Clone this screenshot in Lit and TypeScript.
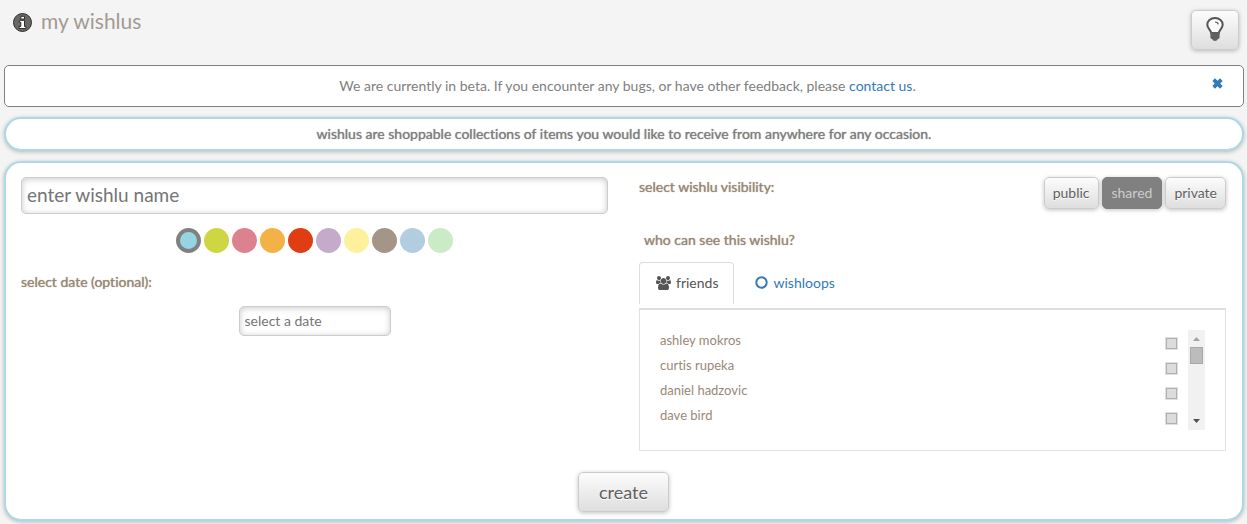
import { LitElement, html, css, svg } from "lit";
import { customElement, state } from "lit/decorators.js";
import { classMap } from "lit/directives/class-map.js";
import { styleMap } from "lit/directives/style-map.js";

const COLORS = [
  { name: "sky", value: "#96d4e2" },
  { name: "lime", value: "#cfd643" },
  { name: "rose", value: "#dc818e" },
  { name: "orange", value: "#f4b145" },
  { name: "red", value: "#df3e15" },
  { name: "lilac", value: "#c5abcb" },
  { name: "yellow", value: "#fdf29b" },
  { name: "taupe", value: "#a39587" },
  { name: "blue", value: "#b2cde0" },
  { name: "mint", value: "#caebc5" },
];
const FRIENDS = ["ashley mokros", "curtis rupeka", "daniel hadzovic", "dave bird"];
const VISIBILITIES = ["public", "shared", "private"];

const infoIcon = svg`<svg width="20" height="20" viewBox="0 0 20 20" aria-hidden="true">
  <circle cx="10.500" cy="10.500" r="9" fill="#6b6764" stroke="#2e2e2e" stroke-width="1"/>
  <path d="M7.300 8.300h5.200v6.200h1.400v2H7.100v-2h1.700v-4.200H7.300zM8.800 4.300h3.700v2.800H8.800z" fill="#fff" stroke="#2e2e2e" stroke-width="1"/>
</svg>`;

const bulbIcon = svg`<svg width="18" height="26" viewBox="0 0 18 26" aria-hidden="true">
  <path d="M9 2C4.400 2 1.300 4.900 1.300 8.700c0 3.800 3.600 5 3.900 8.300h7.600c.3-3.300 3.900-4.500 3.900-8.300C16.700 4.900 13.600 2 9 2z" fill="#fcfcfc" stroke="#555" stroke-width="2"/>
  <path d="M9 6c1.900 0 3.100.9 3.300 2.400" fill="none" stroke="#555" stroke-width="1.200"/>
  <path d="M4.400 16.200h9.200v5c0 1-.9 1.800-2 2-.3.900-1.300 1.700-2.600 1.700s-2.300-.8-2.600-1.700c-1.100-.2-2-1-2-2z" fill="#606060"/>
</svg>`;

const closeIcon = svg`<svg width="11" height="11" viewBox="0 0 10 10" aria-hidden="true">
  <path d="M2.700.300 5 2.500 7.300.300 9.700 2.700 7.500 5 9.700 7.300 7.300 9.700 5 7.500 2.700 9.700.300 7.300 2.500 5 .300 2.700z" fill="#337ab7"/>
</svg>`;

const groupIcon = svg`<svg width="15" height="14" viewBox="0 0 1920 1792" aria-hidden="true">
  <path fill="#555" d="M593 896q-162 5-265 128H194q-82 0-138-40.500T0 865q0-353 124-353 6 0 43.500 21t97.500 42.500T384 597q67 0 133-23-5 37-5 66 0 139 81 256zm1071 637q0 120-73 189.500t-194 69.500H523q-121 0-194-69.500T256 1533q0-53 3.500-103.500t14-109T300 1212t43-97.500 62-81 85.500-53.500T602 960q10 0 43 21.500t73 48 107 48 135 21.500 135-21.500 107-48 73-48 43-21.500q61 0 111.500 20t85.500 53.500 62 81 43 97.500 26.500 108.500 14 109 3.500 103.500zM640 256q0 106-75 181t-181 75-181-75-75-181 75-181T384 0t181 75 75 181zm704 384q0 159-112.500 271.500T960 1024 688.500 911.500 576 640t112.500-271.500T960 256t271.500 112.500T1344 640zm576 225q0 78-56 118.500t-138 40.500h-134q-103-123-265-128 81-117 81-256 0-29-5-66 66 23 133 23 59 0 119-21.500t97.500-42.500 43.500-21q124 0 124 353zm-128-609q0 106-75 181t-181 75-181-75-75-181 75-181 181-75 181 75 75 181z"/>
</svg>`;

const ringIcon = svg`<svg width="13" height="13" viewBox="0 0 13 13" aria-hidden="true">
  <circle cx="6.500" cy="6.500" r="5.200" fill="none" stroke="#337ab7" stroke-width="2"/>
</svg>`;

@customElement("app-root")
export class AppRoot extends LitElement {
  @state() private color = "sky";
  @state() private visibility = "shared";
  @state() private tab = "friends";
  @state() private noticeOpen = true;

  static styles = css`
    :host {
      display: block;
      min-height: 100vh;
      box-sizing: border-box;
      padding: 0 3px 3px 4px;
      background: #f4f4f4;
      color: #808080;
      font: 14px/20px Lato, sans-serif;
      font-variant-ligatures: none;
    }
    *, *::before { box-sizing: border-box; }
    button, input { font-family: inherit; font-variant-ligatures: none; margin: 0; }
    button { cursor: pointer; }
    svg { display: block; flex: none; }
    a { color: #337ab7; text-decoration: none; }
    .header {
      display: flex;
      justify-content: space-between;
      align-items: flex-start;
      padding: 10px 5px 15px 8px;
    }
    .title { display: flex; align-items: flex-end; gap: 9px; }
    h1 { margin: 0; font-size: 21px; line-height: 22px; font-weight: 400; color: #a39a93; }
    .btn {
      border: 1px solid #ccc;
      border-radius: 5px;
      background: linear-gradient(#fcfcfc, #dedede);
      box-shadow: 0 1px 4px rgba(0, 0, 0, 0.25);
      color: #606060;
      text-shadow: 0 1px 0 #fff;
    }
    .hint { width: 48px; height: 40px; padding: 0 0 2px; display: grid; place-items: center; }
    .notice {
      display: flex;
      align-items: center;
      padding: 10px 20px 10px 38px;
      border: 1px solid #808080;
      border-radius: 5px;
      background: #fff;
    }
    .notice p { flex: 1; margin: 0; text-align: center; }
    .close { padding: 0 0 5px; border: 0; background: none; }
    .card {
      margin-top: 10px;
      border: 2px solid #add8e6;
      border-radius: 17px;
      background: #fff;
      box-shadow: 0 1px 4px rgba(0, 0, 0, 0.25);
    }
    .strong { text-shadow: 0 0 1px currentColor; }
    .intro { padding: 5px 15px; text-align: center; }
    .form { padding: 14px 16px 7px 15px; }
    .columns { display: grid; grid-template-columns: 1fr 1fr; gap: 31px; }
    .label { display: block; color: #998877; }
    .field {
      border: 1px solid #ccc;
      border-radius: 5px;
      background: #fff;
      box-shadow: inset 0 1px 6px rgba(0, 0, 0, 0.22);
      color: #757575;
      padding: 0 5px 2px;
      outline: none;
    }
    .field::placeholder { color: #757575; opacity: 1; }
    .name { display: block; width: 100%; height: 37px; font-size: 19px; }
    .date { display: block; width: 152px; height: 30px; margin: 14px auto 0; font-size: 14px; }
    .swatches {
      display: flex;
      justify-content: center;
      gap: 3px;
      margin: 14px 0 19px;
      padding: 0;
      border: 0;
    }
    .swatch {
      appearance: none;
      width: 25px;
      height: 25px;
      border-radius: 50%;
      cursor: pointer;
    }
    .swatch:checked { border: 4px solid #808080; }
    .visibility { display: flex; justify-content: space-between; align-items: flex-start; }
    .choices { display: flex; gap: 3px; }
    .choice { height: 32px; padding: 0 8px 2px; font-size: 14px; }
    .choice.on { padding: 0 9px 2px; background: #808080; border-color: #808080; color: #ccc; text-shadow: none; }
    .who { margin: 21px 0 12px; padding-left: 5px; }
    .tabs { display: flex; gap: 4px; padding-bottom: 4px; }
    .tab {
      display: flex;
      align-items: center;
      gap: 5px;
      height: 42px;
      padding: 0 15px 2px 16px;
      border: 1px solid transparent;
      border-bottom: 0;
      border-radius: 4px 4px 0 0;
      background: none;
      color: #337ab7;
      font-size: 14px;
    }
    .tab.on { border-color: #ddd; color: #555; background: #fff; }
    .panel {
      display: flex;
      gap: 10px;
      padding: 20px;
      border: 1px solid #e2e2e2;
      border-top: 2px solid #ddd;
    }
    .list { flex: 1; margin: 0; padding: 0; list-style: none; font-size: 13px; line-height: 14px; }
    .list label {
      display: flex;
      justify-content: space-between;
      align-items: center;
      height: 25px;
      padding-top: 2px;
      color: #998877;
    }
    .list span { padding-bottom: 8px; }
    .tick {
      appearance: none;
      width: 13px;
      height: 13px;
      border: 1px solid #e0e0e0;
      background: #dcdcdc;
      box-shadow: inset 0 0 0 1px #b0b0b0;
    }
    .tick:checked { background: #808080; }
    .bar {
      display: flex;
      flex-direction: column;
      align-items: center;
      width: 17px;
      padding: 7px 0;
      background: #f1f1f1;
    }
    .thumb { width: 13px; height: 17px; margin: 6px 0 auto; border: 1px solid #a8a8a8; background: #bcbcbc; }
    .actions { display: flex; justify-content: center; margin-top: 21px; }
    .create { height: 40px; padding: 0 20px; font-size: 18px; }
  `;

  render() {
    return html`
      <header class="header">
        <div class="title">${infoIcon}<h1>my wishlus</h1></div>
        <button class="btn hint" aria-label="tips">${bulbIcon}</button>
      </header>
      ${this.noticeOpen
        ? html`<div class="notice">
            <p>We are currently in beta. If you encounter any bugs, or have other feedback, please <a href="#contact">contact us</a>.</p>
            <button class="close" aria-label="close" @click=${() => (this.noticeOpen = false)}>${closeIcon}</button>
          </div>`
        : null}
      <div class="card intro strong">wishlus are shoppable collections of items you would like to receive from anywhere for any occasion.</div>
      <form class="card form" @submit=${(e: Event) => e.preventDefault()}>
        <div class="columns">
          <div>
            <input class="field name" type="text" placeholder="enter wishlu name" aria-label="wishlu name" />
            <fieldset class="swatches" aria-label="color">
              ${COLORS.map(
                (c) => html`<input class="swatch" type="radio" name="color" aria-label=${c.name}
                  style=${styleMap({ backgroundColor: c.value })}
                  .checked=${this.color === c.name}
                  @change=${() => (this.color = c.name)} />`
              )}
            </fieldset>
            <label class="label strong" for="date">select date (optional):</label>
            <input class="field date" id="date" type="text" placeholder="select a date" />
          </div>
          <div>
            <div class="visibility">
              <span class="label strong" id="vis">select wishlu visibility:</span>
              <div class="choices" role="group" aria-labelledby="vis">
                ${VISIBILITIES.map(
                  (v) => html`<button type="button"
                    class=${classMap({ btn: true, choice: true, on: this.visibility === v })}
                    aria-pressed=${this.visibility === v}
                    @click=${() => (this.visibility = v)}>${v}</button>`
                )}
              </div>
            </div>
            <div class="label strong who">who can see this wishlu?</div>
            <div class="tabs" role="tablist">
              ${[
                { id: "friends", icon: groupIcon },
                { id: "wishloops", icon: ringIcon },
              ].map(
                (t) => html`<button type="button" role="tab"
                  class=${classMap({ tab: true, on: this.tab === t.id })}
                  aria-selected=${this.tab === t.id}
                  @click=${() => (this.tab = t.id)}>${t.icon}${t.id}</button>`
              )}
            </div>
            <div class="panel">
              <ul class="list">
                ${FRIENDS.map((f) => html`<li><label><span>${f}</span><input class="tick" type="checkbox" /></label></li>`)}
              </ul>
              <div class="bar" aria-hidden="true">
                <svg width="7" height="4" viewBox="0 0 7 4"><path d="M0 4 3.500 0 7 4z" fill="#a3a3a3" /></svg>
                <div class="thumb"></div>
                <svg width="7" height="4" viewBox="0 0 7 4"><path d="M0 0h7L3.500 4z" fill="#505050" /></svg>
              </div>
            </div>
          </div>
        </div>
        <div class="actions"><button class="btn create" type="submit">create</button></div>
      </form>
    `;
  }
}
